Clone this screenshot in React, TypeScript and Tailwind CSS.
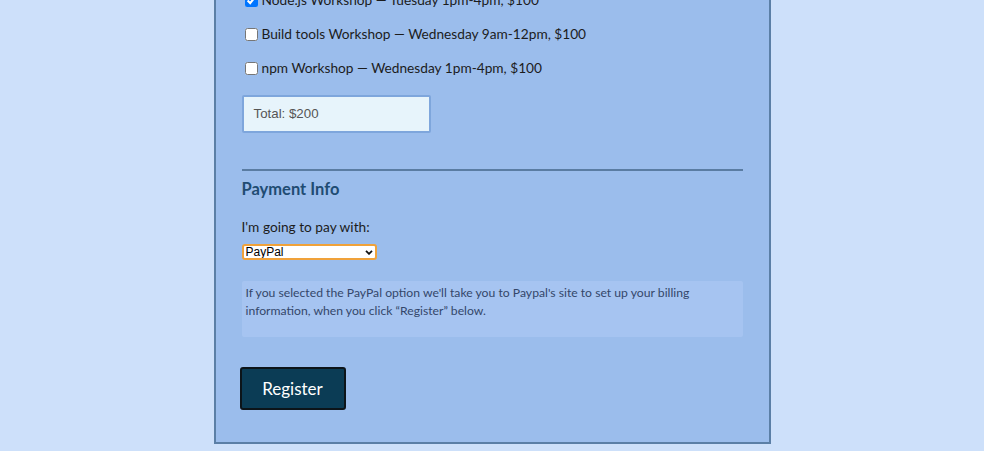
import React from 'react';

const workshops = [
    { label: 'Node.js Workshop — Tuesday 1pm-4pm, $100', checked: true },
    { label: 'Build tools Workshop — Wednesday 9am-12pm, $100', checked: false },
    { label: 'npm Workshop — Wednesday 1pm-4pm, $100', checked: false },
];

const App: React.FC = () => {
    return (
        <div className="h-[451px] overflow-hidden bg-[#cde0fa] font-['Lato','Noto_Sans',sans-serif] text-[13.7px] text-[#1c1c1c]">
            <div className="mx-auto -mt-[19px] w-[557px] border-2 border-[#5b7fa6] bg-[#9bbdec] px-[26px] pb-[32px]">
                {/* activities */}
                <div>
                    {workshops.map((w, i) => (
                        <label key={i} className="flex h-[34px] items-center pl-[3px]">
                            <input type="checkbox" defaultChecked={w.checked} className="m-0 h-[13px] w-[13px]" />
                            <span className="ml-[4px]">{w.label}</span>
                        </label>
                    ))}
                </div>

                <div className="mt-[10px] flex h-[38px] w-[189px] items-center rounded-[2px] border-2 border-[#7ea6dc] bg-[#e7f4fb] px-[10px] font-['Liberation_Sans',sans-serif] text-[13.3px] text-[#555]">
                    Total: $200
                </div>

                <div className="mt-[36px] h-[2px] bg-[#5a7ca2]" />

                {/* payment */}
                <h3 className="mt-[6px] text-[16.5px] leading-[24px] font-bold text-[#1f4c73]">Payment Info</h3>
                <p className="mt-[16px] leading-[20px]">I'm going to pay with:</p>

                <div className="relative mt-[7px] h-[16px] w-[135px]">
                    <select
                        defaultValue="paypal"
                        className="block h-[16px] w-full appearance-none rounded-[3px] border-2 border-[#f0a23a] bg-white py-0 pl-[2px] font-['Liberation_Sans',sans-serif] text-[12px] leading-[12px] text-black outline-none"
                    >
                        <option value="credit">Credit Card</option>
                        <option value="paypal">PayPal</option>
                        <option value="bitcoin">Bitcoin</option>
                    </select>
                    <svg className="pointer-events-none absolute right-[4px] top-[6px]" width="8" height="5" viewBox="0 0 8 5">
                        <path d="M1 0.8 L4 3.8 L7 0.8" stroke="#111" strokeWidth="1.8" fill="none" />
                    </svg>
                </div>

                <div className="mt-[21px] h-[56px] rounded-[2px] bg-[#a6c4f1] px-[4px] pt-[3px] text-[12.2px] leading-[18px] text-[#34476a]">
                    If you selected the PayPal option we'll take you to Paypal's site to set up your billing information, when you click “Register” below.
                </div>

                <button className="-ml-[2px] mt-[30px] h-[43px] w-[106px] rounded-[3px] border-2 border-[#0c1419] bg-[#0b3c55] text-[17px] text-white">
                    Register
                </button>
            </div>
        </div>
    );
};

export default App;
